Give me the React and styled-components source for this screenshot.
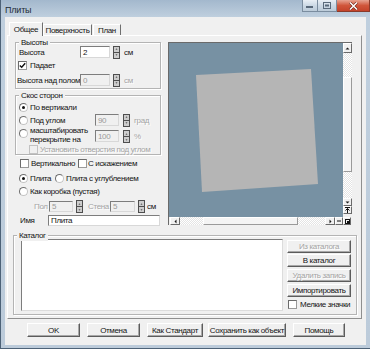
import React from 'react';
import styled, { createGlobalStyle } from 'styled-components';

const FONT = `"Liberation Sans", Arial, sans-serif`;

const Global = createGlobalStyle`
  html, body { margin: 0; padding: 0; background: #fff; }
  body { font-family: ${FONT}; }
`;

const Window = styled.div`
  width: 370px;
  height: 349px;
  box-sizing: border-box;
  display: flex;
  flex-direction: column;
  overflow: hidden;
  background: linear-gradient(180deg, #a3b8cd 0px, #bfcfde 17px, #bccbda 100%);
  border-left: 1px solid #4d6277;
  border-bottom: 1px solid #4d6277;
  font-family: ${FONT};
  font-size: 8px;
  letter-spacing: -0.35px;
  color: #141414;
`;

const TitleBar = styled.div`
  height: 17px;
  flex: none;
  display: flex;
  align-items: flex-start;
`;

const Title = styled.div`
  padding: 5px 0 0 4px;
  line-height: 10px;
  font-size: 9px;
  letter-spacing: -0.2px;
  color: #1e2a36;
`;

const Ctrls = styled.div`
  margin-left: auto;
  display: flex;
  height: 12px;
`;

const CtrlBtn = styled.div`
  box-sizing: border-box;
  width: ${p => p.$w}px;
  height: 12px;
  border: 1px solid ${p => (p.$close ? '#8a3a2a' : '#7b8d9f')};
  border-top: none;
  border-left-width: ${p => (p.$first ? 1 : 0)}px;
  background: ${p =>
    p.$close
      ? 'linear-gradient(180deg, #e7a492 0%, #d0563b 50%, #c4432a 100%)'
      : 'linear-gradient(180deg, #e9eff5 0%, #ccd9e5 50%, #bccbd9 100%)'};
  display: flex;
  align-items: center;
  justify-content: center;
`;

const Client = styled.div`
  flex: 1;
  margin: 0 4px 3px 4px;
  background: #f0f0f0;
  display: flex;
  flex-direction: column;
`;

const TabStrip = styled.div`
  margin-top: 5px;
  padding-left: 4px;
  height: 13px;
  display: flex;
  align-items: flex-end;
  position: relative;
  z-index: 1;
`;

const Tab = styled.div`
  box-sizing: border-box;
  width: ${p => p.$w}px;
  height: ${p => (p.$active ? 14 : 11)}px;
  margin-bottom: ${p => (p.$active ? -1 : 0)}px;
  margin-left: ${p => p.$ml ?? 0}px;
  background: #f0f0f0;
  border: 1px solid;
  border-color: #fff #6f6f6f transparent #fff;
  border-bottom: none;
  display: flex;
  align-items: center;
  justify-content: center;
  padding-top: ${p => (p.$active ? 0 : 1)}px;
  white-space: nowrap;
`;

const TabPage = styled.div`
  box-sizing: border-box;
  margin: 0 4px 0 2px;
  height: 284px;
  border: 1px solid;
  border-color: #fff #8f8f8f #8f8f8f #fff;
  display: flex;
  flex-direction: column;
`;

const TopArea = styled.div`
  display: flex;
  align-items: flex-start;
`;

const LeftCol = styled.div`
  margin-left: 7px;
  width: 146px;
  display: flex;
  flex-direction: column;
`;

const Group = styled.div`
  position: relative;
  box-sizing: border-box;
  height: ${p => p.$h}px;
  margin-top: ${p => p.$mt}px;
  margin-left: ${p => p.$ml ?? 0}px;
  margin-right: ${p => p.$mr ?? 0}px;
  border: 1px solid #b4b4b4;
  box-shadow: inset 1px 1px 0 #fff, 1px 1px 0 #fff;
  padding-top: ${p => p.$pt}px;
  display: flex;
  flex-direction: ${p => p.$dir ?? 'column'};
`;

const Legend = styled.span`
  position: absolute;
  top: -6px;
  left: 3px;
  padding: 0 2px;
  background: #f0f0f0;
  line-height: 11px;
  white-space: nowrap;
`;

const Row = styled.div`
  display: flex;
  align-items: ${p => p.$align ?? 'center'};
  height: ${p => p.$h ?? 12}px;
  margin-top: ${p => p.$mt ?? 0}px;
  padding-left: ${p => p.$pl ?? 0}px;
`;

const Text = styled.span`
  flex: none;
  white-space: nowrap;
  line-height: 9px;
  width: ${p => (p.$w ? `${p.$w}px` : 'auto')};
  margin-left: ${p => p.$ml ?? 0}px;
  margin-top: ${p => p.$mtop ?? 0}px;
  color: ${p => (p.$dis ? '#a4a4a4' : '#141414')};
  text-shadow: ${p => (p.$dis ? '1px 1px 0 #fff' : 'none')};
`;

const Edit = styled.div`
  box-sizing: border-box;
  flex: none;
  width: ${p => p.$w}px;
  height: ${p => p.$h ?? 12}px;
  margin-left: ${p => p.$ml ?? 0}px;
  margin-top: ${p => p.$mtop ?? 0}px;
  background: ${p => (p.$dis ? '#f0f0f0' : '#fff')};
  border: 1px solid;
  border-color: #7d7d7d #d8d8d8 #d8d8d8 #7d7d7d;
  padding-left: 2px;
  display: flex;
  align-items: center;
  color: ${p => (p.$dis ? '#9a9a9a' : '#141414')};
  line-height: 9px;
  white-space: nowrap;
`;

const SpinBox = styled.div`
  box-sizing: border-box;
  flex: none;
  width: 7px;
  height: 13px;
  margin-left: ${p => p.$ml ?? 3}px;
  margin-top: ${p => p.$mtop ?? 0}px;
  border: 1px solid #4e4e4e;
  background: #cdcdcd;
  display: flex;
  flex-direction: column;
`;

const SpinHalf = styled.div`
  flex: 1;
  display: flex;
  align-items: center;
  justify-content: center;
  & + & {
    border-top: 1px solid #4e4e4e;
  }
`;

const Tri = ({ dir = 'up', color = '#1b1b1b', size = 3 }) => {
  const s = size;
  const pts = {
    up: `0,${s - 1} ${s - 1},0 ${2 * s - 2},${s - 1}`,
    down: `0,0 ${2 * s - 2},0 ${s - 1},${s - 1}`,
    left: `${s - 1},0 0,${s - 1} ${s - 1},${2 * s - 2}`,
    right: `0,0 ${s - 1},${s - 1} 0,${2 * s - 2}`,
  }[dir];
  const w = dir === 'up' || dir === 'down' ? 2 * s - 1 : s;
  const h = dir === 'up' || dir === 'down' ? s : 2 * s - 1;
  return (
    <svg width={w} height={h} viewBox={`-0.5 -0.5 ${w} ${h}`}>
      <polygon points={pts} fill={color} />
    </svg>
  );
};

const Spin = ({ ml, mtop }) => (
  <SpinBox $ml={ml} $mtop={mtop}>
    <SpinHalf><Tri dir="up" size={2} /></SpinHalf>
    <SpinHalf><Tri dir="down" size={2} /></SpinHalf>
  </SpinBox>
);

const CheckBox = styled.span`
  box-sizing: border-box;
  flex: none;
  width: 9px;
  height: 9px;
  margin-left: ${p => p.$ml ?? 0}px;
  border: 1px solid;
  border-color: ${p => (p.$dis ? '#c2c2c2' : '#6b6b6b #9a9a9a #9a9a9a #6b6b6b')};
  background: ${p => (p.$dis ? '#f0f0f0' : '#fff')};
  display: flex;
  align-items: center;
  justify-content: center;
`;

const Check = ({ on, dis, ml }) => (
  <CheckBox $dis={dis} $ml={ml}>
    {on && (
      <svg width="7" height="7" viewBox="0 0 7 7">
        <path d="M0.8 3.4 L2.7 5.3 L6.2 1.2" fill="none" stroke="#111" strokeWidth="1.4" />
      </svg>
    )}
  </CheckBox>
);

const Radio = styled.span`
  box-sizing: border-box;
  flex: none;
  width: 9px;
  height: 9px;
  margin-left: ${p => p.$ml ?? 0}px;
  margin-top: ${p => p.$mtop ?? 0}px;
  border-radius: 50%;
  border: 1px solid;
  border-color: #6e6e6e #c4c4c4 #c4c4c4 #6e6e6e;
  background: #fff;
  display: flex;
  align-items: center;
  justify-content: center;
  &::after {
    content: '';
    display: ${p => (p.$on ? 'block' : 'none')};
    width: 3px;
    height: 3px;
    border-radius: 50%;
    background: #111;
  }
`;

const Preview = styled.div`
  box-sizing: border-box;
  margin: 6px 0 0 7px;
  width: 184px;
  height: 183px;
  border-left: 1px solid #6a6a6a;
  border-top: 1px solid #6a6a6a;
  background: #f0f0f0;
  display: grid;
  grid-template-columns: 174px 9px;
  grid-template-rows: 174px 8px;
`;

const Canvas = styled.div`
  background: #7791a3;
  overflow: hidden;
`;

const VScroll = styled.div`
  display: flex;
  flex-direction: column;
  background: #f0f0f0;
`;

const HScroll = styled.div`
  grid-column: 1 / span 2;
  display: flex;
  padding-left: 1px;
  background: #f0f0f0;
`;

const SBtn = styled.div`
  box-sizing: border-box;
  flex: none;
  width: ${p => p.$w}px;
  height: ${p => p.$h}px;
  background: #f0f0f0;
  border: 1px solid;
  border-color: #fff #6a6a6a #6a6a6a #fff;
  display: flex;
  align-items: center;
  justify-content: center;
`;

const Track = styled.div`
  flex: none;
  width: ${p => (p.$w ? `${p.$w}px` : 'auto')};
  height: ${p => (p.$h ? `${p.$h}px` : 'auto')};
  background: repeating-conic-gradient(#ffffff 0 25%, #e4e4e4 0 50%) 0 0 / 2px 2px;
`;

const Thumb = styled.div`
  box-sizing: border-box;
  flex: none;
  width: ${p => (p.$w ? `${p.$w}px` : 'auto')};
  height: ${p => (p.$h ? `${p.$h}px` : 'auto')};
  background: #f4f4f4;
  border: 1px solid;
  border-color: #fff #9a9a9a #9a9a9a #fff;
`;

const Gap = styled.div`
  flex: none;
  height: ${p => p.$h}px;
`;

const ListBox = styled.div`
  box-sizing: border-box;
  width: 262px;
  height: 72px;
  margin-left: 7px;
  background: #fff;
  border: 1px solid;
  border-color: #7d7d7d #dcdcdc #dcdcdc #7d7d7d;
`;

const SideCol = styled.div`
  margin-left: 4px;
  width: 64px;
  display: flex;
  flex-direction: column;
  padding-top: 1px;
`;

const Btn = styled.div`
  box-sizing: border-box;
  flex: none;
  width: ${p => p.$w}px;
  height: ${p => p.$h ?? 13}px;
  margin-left: ${p => p.$ml ?? 0}px;
  margin-top: ${p => p.$mt ?? 0}px;
  background: #f0f0f0;
  border: 1px solid;
  border-color: #fff #5c5c5c #5c5c5c #fff;
  box-shadow: inset -1px -1px 0 #a8a8a8;
  display: flex;
  align-items: center;
  justify-content: center;
  white-space: nowrap;
  line-height: 9px;
  color: ${p => (p.$dis ? '#a4a4a4' : '#141414')};
  text-shadow: ${p => (p.$dis ? '1px 1px 0 #fff' : 'none')};
`;

const ButtonBar = styled.div`
  display: flex;
  margin-top: 4px;
  padding-left: 22px;
`;

export default function App() {
  return (
    <>
      <Global />
      <Window>
        <TitleBar>
          <Title>Плиты</Title>
          <Ctrls>
            <CtrlBtn $w={16} $first>
              <svg width="8" height="5" viewBox="0 0 8 5"><rect x="0" y="3" width="7" height="2" fill="#59697a" /></svg>
            </CtrlBtn>
            <CtrlBtn $w={19}>
              <svg width="8" height="7" viewBox="0 0 8 7"><rect x="0.5" y="0.5" width="7" height="6" fill="none" stroke="#59697a" /><rect x="2" y="2.5" width="4" height="2" fill="#59697a" /></svg>
            </CtrlBtn>
            <CtrlBtn $w={33} $close>
              <svg width="9" height="8" viewBox="0 0 9 8"><path d="M1 0.5 L8 7.5 M8 0.5 L1 7.5" stroke="#6b2418" strokeWidth="2.6" /><path d="M1 0.5 L8 7.5 M8 0.5 L1 7.5" stroke="#fff" strokeWidth="1.5" /></svg>
            </CtrlBtn>
          </Ctrls>
        </TitleBar>
        <Client>
          <TabStrip>
            <Tab $active $w={34}>Общее</Tab>
            <Tab $w={49}>Поверхность</Tab>
            <Tab $w={28} $ml={1}>План</Tab>
          </TabStrip>
          <TabPage>
            <TopArea>
              <LeftCol>
                <Group $h={47} $mt={6} $pt={3}>
                  <Legend>Высоты</Legend>
                  <Row $pl={3}>
                    <Text $w={61}>Высота</Text>
                    <Edit $w={30}>2</Edit>
                    <Spin ml={3} />
                    <Text $ml={4}>см</Text>
                  </Row>
                  <Row $h={10} $mt={2} $pl={2}>
                    <Check on />
                    <Text $ml={3}>Падает</Text>
                  </Row>
                  <Row $mt={4} $pl={1}>
                    <Text $w={63}>Высота над полом</Text>
                    <Edit $w={30} $dis>0</Edit>
                    <Spin ml={3} />
                    <Text $ml={4} $dis>см</Text>
                  </Row>
                </Group>
                <Group $h={60} $mt={6} $pt={7}>
                  <Legend>Скос сторон</Legend>
                  <Row $h={9} $pl={3}>
                    <Radio $on />
                    <Text $ml={2}>По вертикали</Text>
                  </Row>
                  <Row $mt={2} $pl={3}>
                    <Radio />
                    <Text $ml={2} $w={65}>Под углом</Text>
                    <Edit $w={24} $dis>90</Edit>
                    <Spin ml={4} />
                    <Text $ml={4} $dis>град</Text>
                  </Row>
                  <Row $h={17} $pl={3} $align="flex-start">
                    <Radio $mtop={3} />
                    <Text $ml={2} $w={65}>масштабировать<br />перекрытие на</Text>
                    <Edit $w={24} $dis $mtop={4}>100</Edit>
                    <Spin ml={4} mtop={4} />
                    <Text $ml={4} $dis $mtop={6}>%</Text>
                  </Row>
                  <Row $h={9} $mt={2} $pl={13}>
                    <Check dis />
                    <Text $ml={2} $dis>Установить отверстия под углом</Text>
                  </Row>
                </Group>
                <Row $h={9} $mt={4} $pl={5}>
                  <Check />
                  <Text $ml={2} $w={47}>Вертикально</Text>
                  <Check />
                  <Text $ml={1}>С искажением</Text>
                </Row>
                <Row $h={9} $mt={6} $pl={4}>
                  <Radio $on />
                  <Text $ml={2} $w={25}>Плита</Text>
                  <Radio />
                  <Text $ml={2}>Плита с углублением</Text>
                </Row>
                <Row $h={9} $mt={4} $pl={4}>
                  <Radio />
                  <Text $ml={2}>Как коробка (пустая)</Text>
                </Row>
                <Row $h={11} $mt={5} $pl={19}>
                  <Text $w={15} $dis>Пол</Text>
                  <Edit $w={24} $h={11} $dis>5</Edit>
                  <Spin ml={3} />
                  <Text $ml={5} $w={22} $dis>Стена</Text>
                  <Edit $w={25} $h={11} $dis>5</Edit>
                  <Spin ml={3} />
                  <Text $ml={2}>см</Text>
                </Row>
                <Row $h={11} $mt={3} $pl={5}>
                  <Text $w={28}>Имя</Text>
                  <Edit $w={112} $h={11}>Плита</Edit>
                </Row>
              </LeftCol>
              <Preview>
                <Canvas>
                  <svg width="174" height="174" viewBox="0 0 174 174">
                    <polygon points="27,32 142,26 149,141 33,149" fill="#b5b5b5" />
                  </svg>
                </Canvas>
                <VScroll>
                  <SBtn $w={9} $h={10}><Tri dir="up" size={3} /></SBtn>
                  <Track $h={24} />
                  <Thumb $h={95} />
                  <Track $h={26} />
                  <SBtn $w={9} $h={8}><Tri dir="down" size={3} /></SBtn>
                  <SBtn $w={9} $h={8}>
                    <svg width="5" height="6" viewBox="0 0 5 6"><path d="M0 0.5 H5 M2.5 1.5 V6 M0.5 3.5 L2.5 1.5 L4.5 3.5" fill="none" stroke="#111" strokeWidth="1" /></svg>
                  </SBtn>
                  <Gap $h={3} />
                </VScroll>
                <HScroll>
                  <SBtn $w={10} $h={8}><Tri dir="left" size={3} /></SBtn>
                  <Track $w={23} />
                  <Thumb $w={95} />
                  <Track $w={27} />
                  <SBtn $w={10} $h={8}><Tri dir="right" size={3} /></SBtn>
                  <SBtn $w={8} $h={8}>
                    <svg width="4" height="2" viewBox="0 0 4 2"><rect x="0" y="0.5" width="4" height="1" fill="#111" /></svg>
                  </SBtn>
                  <SBtn $w={8} $h={8}>
                    <svg width="5" height="5" viewBox="0 0 5 5"><rect x="0.5" y="0.5" width="4" height="4" fill="none" stroke="#111" /><rect x="2" y="2" width="2" height="2" fill="#111" /></svg>
                  </SBtn>
                </HScroll>
              </Preview>
            </TopArea>
            <Group $h={80} $mt={9} $ml={5} $mr={4} $pt={3} $dir="row">
              <Legend>Каталог</Legend>
              <ListBox />
              <SideCol>
                <Btn $w={64} $dis>Из каталога</Btn>
                <Btn $w={64} $mt={1}>В каталог</Btn>
                <Btn $w={64} $mt={2} $dis>Удалить запись</Btn>
                <Btn $w={64} $mt={2}>Импортировать</Btn>
                <Row $h={9} $mt={3} $pl={1}>
                  <Check />
                  <Text $ml={3}>Мелкие значки</Text>
                </Row>
              </SideCol>
            </Group>
          </TabPage>
          <ButtonBar>
            <Btn $w={53} $h={14}>OK</Btn>
            <Btn $w={53} $h={14} $ml={7}>Отмена</Btn>
            <Btn $w={56} $h={14} $ml={7}>Как Стандарт</Btn>
            <Btn $w={78} $h={14} $ml={5}>Сохранить как объект</Btn>
            <Btn $w={52} $h={14} $ml={7}>Помощь</Btn>
          </ButtonBar>
        </Client>
      </Window>
    </>
  );
}
